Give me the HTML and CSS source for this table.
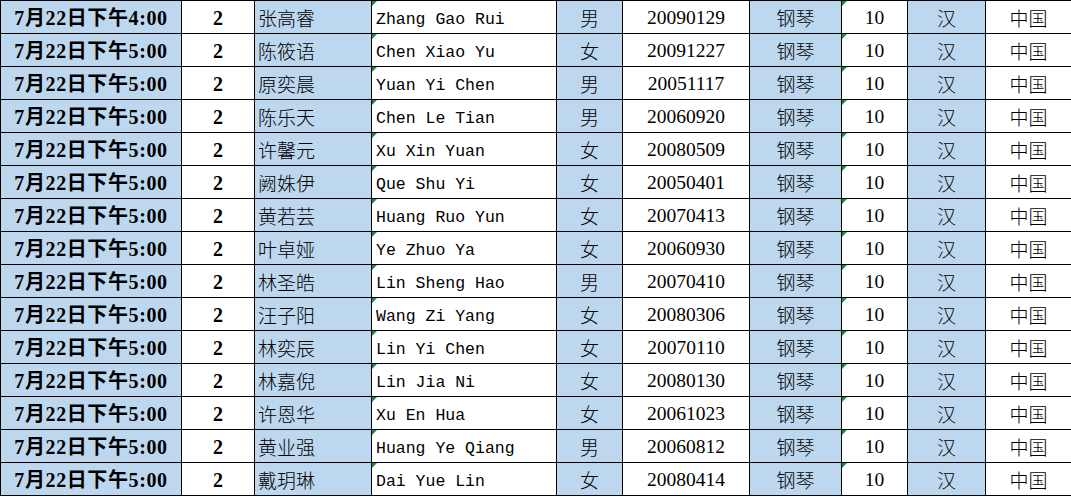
FILE: index.html
```html
<!DOCTYPE html>
<html lang="zh">
<head>
<meta charset="utf-8">
<link rel="stylesheet" href="styles.css">
</head>
<body>
<table class="sheet">
<colgroup>
<col class="c-time"><col class="c-num"><col class="c-name"><col class="c-pinyin"><col class="c-sex"><col class="c-date"><col class="c-inst"><col class="c-age"><col class="c-eth"><col class="c-nat">
</colgroup>
<tbody>
<tr><td class="time blue">7月22日下午4:00</td><td class="num">2</td><td class="name blue">张高睿</td><td class="pinyin flag">Zhang Gao Rui</td><td class="cn blue">男</td><td class="digits">20090129</td><td class="cn blue">钢琴</td><td class="digits flag">10</td><td class="cn blue">汉</td><td class="cn">中国</td></tr>
<tr><td class="time blue">7月22日下午5:00</td><td class="num">2</td><td class="name blue">陈筱语</td><td class="pinyin flag">Chen Xiao Yu</td><td class="cn blue">女</td><td class="digits">20091227</td><td class="cn blue">钢琴</td><td class="digits flag">10</td><td class="cn blue">汉</td><td class="cn">中国</td></tr>
<tr><td class="time blue">7月22日下午5:00</td><td class="num">2</td><td class="name blue">原奕晨</td><td class="pinyin flag">Yuan Yi Chen</td><td class="cn blue">男</td><td class="digits">20051117</td><td class="cn blue">钢琴</td><td class="digits flag">10</td><td class="cn blue">汉</td><td class="cn">中国</td></tr>
<tr><td class="time blue">7月22日下午5:00</td><td class="num">2</td><td class="name blue">陈乐天</td><td class="pinyin flag">Chen Le Tian</td><td class="cn blue">男</td><td class="digits">20060920</td><td class="cn blue">钢琴</td><td class="digits flag">10</td><td class="cn blue">汉</td><td class="cn">中国</td></tr>
<tr><td class="time blue">7月22日下午5:00</td><td class="num">2</td><td class="name blue">许馨元</td><td class="pinyin flag">Xu Xin Yuan</td><td class="cn blue">女</td><td class="digits">20080509</td><td class="cn blue">钢琴</td><td class="digits flag">10</td><td class="cn blue">汉</td><td class="cn">中国</td></tr>
<tr><td class="time blue">7月22日下午5:00</td><td class="num">2</td><td class="name blue">阙姝伊</td><td class="pinyin flag">Que Shu Yi</td><td class="cn blue">女</td><td class="digits">20050401</td><td class="cn blue">钢琴</td><td class="digits flag">10</td><td class="cn blue">汉</td><td class="cn">中国</td></tr>
<tr><td class="time blue">7月22日下午5:00</td><td class="num">2</td><td class="name blue">黄若芸</td><td class="pinyin flag">Huang Ruo Yun</td><td class="cn blue">女</td><td class="digits">20070413</td><td class="cn blue">钢琴</td><td class="digits flag">10</td><td class="cn blue">汉</td><td class="cn">中国</td></tr>
<tr><td class="time blue">7月22日下午5:00</td><td class="num">2</td><td class="name blue">叶卓娅</td><td class="pinyin flag">Ye Zhuo Ya</td><td class="cn blue">女</td><td class="digits">20060930</td><td class="cn blue">钢琴</td><td class="digits flag">10</td><td class="cn blue">汉</td><td class="cn">中国</td></tr>
<tr><td class="time blue">7月22日下午5:00</td><td class="num">2</td><td class="name blue">林圣皓</td><td class="pinyin flag">Lin Sheng Hao</td><td class="cn blue">男</td><td class="digits">20070410</td><td class="cn blue">钢琴</td><td class="digits flag">10</td><td class="cn blue">汉</td><td class="cn">中国</td></tr>
<tr><td class="time blue">7月22日下午5:00</td><td class="num">2</td><td class="name blue">汪子阳</td><td class="pinyin flag">Wang Zi Yang</td><td class="cn blue">女</td><td class="digits">20080306</td><td class="cn blue">钢琴</td><td class="digits flag">10</td><td class="cn blue">汉</td><td class="cn">中国</td></tr>
<tr><td class="time blue">7月22日下午5:00</td><td class="num">2</td><td class="name blue">林奕辰</td><td class="pinyin flag">Lin Yi Chen</td><td class="cn blue">女</td><td class="digits">20070110</td><td class="cn blue">钢琴</td><td class="digits flag">10</td><td class="cn blue">汉</td><td class="cn">中国</td></tr>
<tr><td class="time blue">7月22日下午5:00</td><td class="num">2</td><td class="name blue">林嘉倪</td><td class="pinyin flag">Lin Jia Ni</td><td class="cn blue">女</td><td class="digits">20080130</td><td class="cn blue">钢琴</td><td class="digits flag">10</td><td class="cn blue">汉</td><td class="cn">中国</td></tr>
<tr><td class="time blue">7月22日下午5:00</td><td class="num">2</td><td class="name blue">许恩华</td><td class="pinyin flag">Xu En Hua</td><td class="cn blue">女</td><td class="digits">20061023</td><td class="cn blue">钢琴</td><td class="digits flag">10</td><td class="cn blue">汉</td><td class="cn">中国</td></tr>
<tr><td class="time blue">7月22日下午5:00</td><td class="num">2</td><td class="name blue">黄业强</td><td class="pinyin flag">Huang Ye Qiang</td><td class="cn blue">男</td><td class="digits">20060812</td><td class="cn blue">钢琴</td><td class="digits flag">10</td><td class="cn blue">汉</td><td class="cn">中国</td></tr>
<tr><td class="time blue">7月22日下午5:00</td><td class="num">2</td><td class="name blue">戴玥琳</td><td class="pinyin flag">Dai Yue Lin</td><td class="cn blue">女</td><td class="digits">20080414</td><td class="cn blue">钢琴</td><td class="digits flag">10</td><td class="cn blue">汉</td><td class="cn">中国</td></tr>
</tbody>
</table>
</body>
</html>
```
FILE: styles.css
```css
html, body {
  margin: 0;
  padding: 0;
  background: #ffffff;
}

.sheet {
  border-collapse: collapse;
  table-layout: fixed;
  width: 1071px;
  color: #000;
}

.c-time { width: 181px; }
.c-num { width: 73px; }
.c-name { width: 117px; }
.c-pinyin { width: 185px; }
.c-sex { width: 66px; }
.c-date { width: 127px; }
.c-inst { width: 92px; }
.c-age { width: 66px; }
.c-eth { width: 78px; }
.c-nat { width: 86px; }

.sheet tr {
  height: 33px;
}

.sheet td {
  border: 1px solid #000;
  padding: 2px 0 0 0;
  height: 30px;
  white-space: nowrap;
  overflow: hidden;
  position: relative;
  vertical-align: middle;
  text-align: center;
  font-family: "Liberation Serif", "Noto Sans CJK SC", serif;
  font-size: 19px;
  line-height: 20px;
}

.sheet td.blue {
  background: #bdd7ee;
}

.sheet td.time {
  font-weight: 700;
  font-size: 20px;
  letter-spacing: 0.6px;
}

.sheet td.num {
  font-weight: 700;
  font-size: 20px;
}

.sheet td.name {
  text-align: left;
  padding-left: 3px;
  font-family: "Noto Sans CJK SC", sans-serif;
  font-weight: 300;
  font-size: 19px;
}

.sheet td.pinyin {
  text-align: left;
  padding: 5px 0 0 4px;
  height: 27px;
  font-family: "Liberation Mono", monospace;
  font-size: 16.5px;
}

.sheet td.cn {
  font-family: "Noto Sans CJK SC", sans-serif;
  font-weight: 300;
  font-size: 19px;
}

.sheet td.digits {
  font-family: "Liberation Serif", serif;
  font-size: 19.5px;
}

.flag::before {
  content: "";
  position: absolute;
  top: 0;
  left: 0;
  border-top: 5px solid #1e8c3a;
  border-right: 5px solid transparent;
}
```
